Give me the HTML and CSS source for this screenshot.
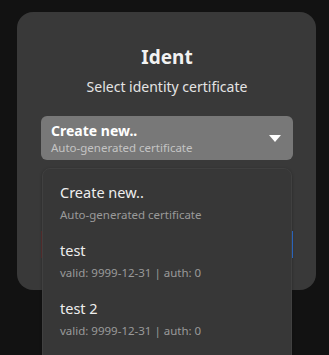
FILE: index.html
```html
<!DOCTYPE html>
<html>
<head>
<meta charset="utf-8">
<link rel="stylesheet" href="styles.css">
</head>
<body>
<div class="screen">
  <div class="card">
    <h1 class="title">Ident</h1>
    <p class="subtitle">Select identity certificate</p>
    <div class="select">
      <div class="select-text">
        <div class="select-main">Create new..</div>
        <div class="select-sub">Auto-generated certificate</div>
      </div>
      <span class="caret"></span>
    </div>
    <div class="hidden-row"></div>
  </div>
  <div class="menu">
    <div class="item">
      <div class="item-main">Create new..</div>
      <div class="item-sub">Auto-generated certificate</div>
    </div>
    <div class="item">
      <div class="item-main">test</div>
      <div class="item-sub">valid: 9999-12-31 | auth: 0</div>
    </div>
    <div class="item">
      <div class="item-main">test 2</div>
      <div class="item-sub">valid: 9999-12-31 | auth: 0</div>
    </div>
  </div>
</div>
</body>
</html>
```
FILE: styles.css
```css
html, body {
  margin: 0;
  padding: 0;
  background: #121212;
  font-family: "Noto Sans", "DejaVu Sans", sans-serif;
  overflow: hidden;
}
.screen {
  position: relative;
  width: 329px;
  height: 355px;
  padding: 12px 13px 0 17px;
  box-sizing: border-box;
}
.card {
  width: 299px;
  background: #393939;
  border-radius: 16px;
  padding: 33px 23px 32px 24px;
  box-sizing: border-box;
  display: flex;
  flex-direction: column;
}
.title {
  margin: 0;
  text-align: center;
  font-size: 19px;
  line-height: 24px;
  font-weight: 700;
  color: #f2f2f2;
}
.subtitle {
  margin: 8px 0 0;
  text-align: center;
  font-size: 14px;
  line-height: 20px;
  color: #e4e4e4;
}
.select {
  margin-top: 19px;
  height: 44px;
  background: #787878;
  border-radius: 6px;
  display: flex;
  align-items: center;
  padding: 0 12px 0 10px;
}
.select-text {
  flex: 1;
}
.select-main {
  font-size: 14px;
  font-weight: 700;
  line-height: 19px;
  color: #ffffff;
}
.select-sub {
  font-size: 11.5px;
  line-height: 15px;
  color: #c4c4c4;
}
.caret {
  width: 0;
  height: 0;
  border-left: 6px solid transparent;
  border-right: 6px solid transparent;
  border-top: 7px solid #ffffff;
}
.hidden-row {
  margin-top: 71px;
  height: 27px;
  border-left: 1px solid #5a3030;
  border-right: 1px solid #2f6fd0;
}
.menu {
  position: absolute;
  left: 42px;
  top: 168px;
  width: 250px;
  height: 200px;
  background: #373737;
  border: 1px solid #404040;
  border-radius: 8px;
  box-sizing: border-box;
  padding-top: 4px;
  box-shadow: 0 1px 3px rgba(0,0,0,0.3);
}
.item {
  padding: 8px 17px 6px;
}
.item-main {
  font-size: 14.5px;
  line-height: 22px;
  color: #eeeeee;
}
.item-sub {
  margin-top: 2px;
  font-size: 11.5px;
  line-height: 20px;
  color: #9a9a9a;
}
```
